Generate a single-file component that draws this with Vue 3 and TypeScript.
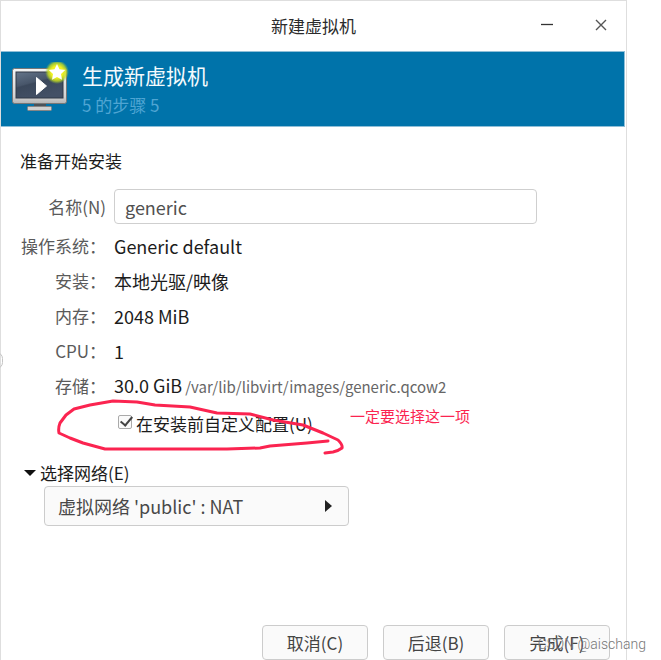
<script setup lang="ts">
import { ref } from 'vue'

interface Detail {
  label: string
  value: string
  note?: string
}

const name = ref('generic')
const customize = ref(true)
const network = ref('nat')

const details: Detail[] = [
  { label: '操作系统：', value: 'Generic default' },
  { label: '安装：', value: '本地光驱/映像' },
  { label: '内存：', value: '2048 MiB' },
  { label: 'CPU：', value: '1' },
  { label: '存储：', value: '30.0 GiB', note: '/var/lib/libvirt/images/generic.qcow2' },
]

const actions: string[] = ['取消(C)', '后退(B)', '完成(F)']
</script>

<template>
  <div class="page">
    <main class="window">
      <header class="titlebar">
        <h1 class="title">新建虚拟机</h1>
        <div class="controls">
          <button type="button" class="control" aria-label="最小化">
            <svg width="14" height="14" viewBox="0 0 14 14"><path d="M1 5.500h12" stroke="#333" stroke-width="1.300" /></svg>
          </button>
          <button type="button" class="control" aria-label="关闭">
            <svg width="14" height="14" viewBox="0 0 14 14"><path d="M2 1l10 10M12 1l-10 10" stroke="#555" stroke-width="1.400" /></svg>
          </button>
        </div>
      </header>

      <section class="banner">
        <svg class="logo" width="60" height="54" viewBox="0 0 60 54" aria-hidden="true">
          <defs>
            <linearGradient id="frame" x1="0" y1="0" x2="0" y2="1">
              <stop offset="0" stop-color="#f4f4f4" />
              <stop offset="0.8" stop-color="#d4d4d4" />
              <stop offset="1" stop-color="#b4b4b4" />
            </linearGradient>
            <linearGradient id="screen" x1="0" y1="0" x2="0.5" y2="1">
              <stop offset="0" stop-color="#65758a" />
              <stop offset="0.45" stop-color="#48566a" />
              <stop offset="0.5" stop-color="#3b485b" />
              <stop offset="1" stop-color="#435066" />
            </linearGradient>
            <radialGradient id="glow">
              <stop offset="0.5" stop-color="#eef220" />
              <stop offset="0.76" stop-color="#c6dc20" stop-opacity="0.8" />
              <stop offset="1" stop-color="#8cc43a" stop-opacity="0" />
            </radialGradient>
          </defs>
          <path d="M22 41h12v4H22z" fill="#4b5259" />
          <rect x="15.500" y="44.500" width="24" height="4" rx="1" fill="#d0d0d0" stroke="#858585" />
          <rect x="0.500" y="6.500" width="54" height="35" rx="2" fill="url(#frame)" stroke="#777" />
          <rect x="4" y="10" width="47" height="26" fill="url(#screen)" stroke="#303947" />
          <path d="M24.500 15.500v17l10-8.500z" fill="#fff" stroke="#fff" stroke-width="1" stroke-linejoin="round" />
          <circle cx="45" cy="10" r="12" fill="url(#glow)" />
          <path d="M45 2l2.500 5.200 5.700.8-4.200 4 1 5.700-5-2.800-5 2.800 1-5.700-4.200-4 5.700-.8z" fill="#fff" />
        </svg>
        <div>
          <h2 class="banner-title">生成新虚拟机</h2>
          <p class="banner-step">5 的步骤 5</p>
        </div>
      </section>

      <form class="body" @submit.prevent>
        <h3 class="heading">准备开始安装</h3>
        <div class="name-row">
          <label class="label" for="vm-name">名称(N)</label>
          <input id="vm-name" v-model="name" class="field" type="text" />
        </div>
        <dl class="details">
          <template v-for="item in details" :key="item.label">
            <dt class="label">{{ item.label }}</dt>
            <dd class="value">{{ item.value }}<span v-if="item.note" class="note">{{ item.note }}</span></dd>
          </template>
        </dl>

        <div class="option">
          <label class="check">
            <input v-model="customize" type="checkbox" class="box" />
            <span>在安装前自定义配置(U)</span>
          </label>
          <strong class="remark">一定要选择这一项</strong>
          <svg class="scribble" width="300" height="60" viewBox="0 0 300 60" aria-hidden="true">
            <path d="M278 46L257 48 220 51 210 53 177 54 153 54 55 54 33 48 20 43 9 38Q8 33 10 28L16 20 24 14 40 10 63 6 87 7 105 10 140 12 167 18 200 19 223 25 253 30 273 38 288 45Q293 50 292 53 288 56 283 57L275 58" fill="none" stroke="#fb2450" stroke-width="3" stroke-linecap="round" stroke-linejoin="round" />
          </svg>
        </div>

        <details class="network" open>
          <summary class="summary">
            <svg width="12" height="8" viewBox="0 0 12 8" aria-hidden="true"><path d="M0 1h12L6 7z" fill="#111" /></svg>
            <span>选择网络(E)</span>
          </summary>
          <div class="picker">
            <select v-model="network" class="select" aria-label="选择网络(E)">
              <option value="nat">虚拟网络 'public' : NAT</option>
            </select>
            <svg class="arrow" width="7" height="12" viewBox="0 0 7 12" aria-hidden="true"><path d="M0 0l7 6-7 6z" fill="#222" /></svg>
          </div>
        </details>

        <footer class="actions">
          <button v-for="action in actions" :key="action" type="button" class="action">{{ action }}</button>
        </footer>
      </form>
      <span class="handle" />
    </main>
    <span class="watermark">CSDN @aischang</span>
  </div>
</template>

<style>
body {
  margin: 0;
  background: #fff;
}
</style>

<style scoped>
* {
  box-sizing: border-box;
}
.page {
  position: relative;
  height: 100vh;
  padding-right: 34px;
  overflow: hidden;
  font-family: "Noto Sans CJK SC", sans-serif;
  font-size: 17px;
  line-height: 24px;
  color: #1c1c1c;
}
.window {
  position: relative;
  display: flex;
  flex-direction: column;
  height: 100%;
  border: 1px solid #dedede;
  border-bottom: 0;
}
.titlebar {
  position: relative;
  display: flex;
  align-items: center;
  justify-content: center;
  height: 50px;
}
h1, h2, h3, p, dl, dd {
  margin: 0;
  font-weight: 400;
}
.title {
  font-size: 17px;
  color: #2b2b2b;
}
.controls {
  position: absolute;
  right: 18px;
  display: flex;
  gap: 40px;
}
.control {
  display: flex;
  padding: 0;
  border: 0;
  background: none;
}
.banner {
  display: flex;
  gap: 10px;
  height: 76px;
  margin-right: 1px;
  padding: 10px 11px;
  background: #0073aa;
  border: 1px solid #8fbfd8;
  border-left: 0;
}
.banner-title {
  margin-top: -2px;
  font-size: 21px;
  line-height: 30px;
  color: #f4fafd;
}
.banner-step {
  line-height: 30px;
  color: #4fa5d3;
}
.body {
  display: flex;
  flex: 1;
  flex-direction: column;
  padding: 22px 16px 0 19px;
}
.heading {
  font-size: 17px;
}
.name-row,
.details {
  display: grid;
  grid-template-columns: 86px 1fr;
  column-gap: 8px;
  align-items: center;
}
.name-row {
  margin: 16px 73px 4px 0;
}
.details {
  grid-auto-rows: 35px;
}
.label {
  text-align: right;
  white-space: nowrap;
  color: #5a5a5a;
}
.field {
  width: 100%;
  height: 35px;
  padding: 0 10px;
  border: 1px solid #cfcfcf;
  border-radius: 4px;
  font: inherit;
  font-size: 18px;
  color: #505050;
  background: #fff;
}
.value {
  font-size: 18px;
  white-space: nowrap;
}
.note {
  margin-left: 3px;
  font-size: 15px;
  color: #666;
}
.option {
  position: relative;
  display: flex;
  padding: 9px 0 0 98px;
}
.check {
  display: flex;
  align-items: center;
  gap: 4px;
}
.box {
  appearance: none;
  display: grid;
  width: 14px;
  height: 14px;
  margin: 0 0 4px;
  border: 1px solid #aaa;
  border-radius: 2px;
  background: #fafafa;
}
.box:checked::after {
  content: "";
  width: 5px;
  height: 10px;
  margin: -2px 0 0 4px;
  border: solid #444;
  border-width: 0 2px 2px 0;
  transform: rotate(40deg);
}
.remark {
  position: absolute;
  top: 1px;
  left: 330px;
  font-size: 15px;
  font-weight: 400;
  color: #fb2450;
}
.scribble {
  position: absolute;
  top: -8px;
  left: 30px;
  overflow: visible;
  pointer-events: none;
}
.network {
  margin-top: 25px;
}
.summary {
  display: flex;
  align-items: center;
  gap: 4px;
  padding-left: 4px;
  list-style: none;
}
.picker {
  display: grid;
  width: 305px;
  margin: 1px 0 0 24px;
  align-items: center;
}
.select {
  appearance: none;
  grid-area: 1 / 1;
  height: 40px;
  padding: 0 13px;
  border: 1px solid #ccc;
  border-radius: 4px;
  font: inherit;
  font-size: 18px;
  color: #484848;
  background: #fafafa;
}
.arrow {
  grid-area: 1 / 1;
  justify-self: end;
  margin-right: 17px;
  pointer-events: none;
}
.actions {
  display: flex;
  justify-content: flex-end;
  gap: 15px;
  margin-top: auto;
}
.action {
  width: 106px;
  height: 35px;
  padding: 0;
  border: 1px solid #ccc;
  border-radius: 4px;
  font: inherit;
  color: #444;
  background: #fafafa;
}
.handle {
  position: absolute;
  top: 351px;
  left: -11px;
  width: 13px;
  height: 17px;
  border: 1px solid #c4c4c4;
  border-radius: 8px;
}
.watermark {
  position: absolute;
  right: 15px;
  bottom: 4px;
  font-family: Roboto, sans-serif;
  font-size: 14px;
  font-weight: 300;
  color: #777;
}
</style>
